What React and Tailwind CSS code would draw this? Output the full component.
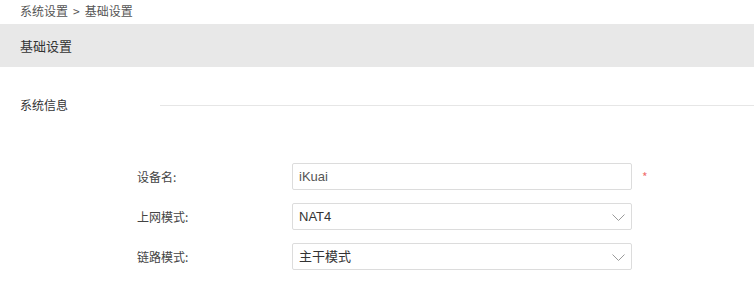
import React from "react";

const font = { fontFamily: '"Noto Sans CJK SC", "Liberation Sans", sans-serif' };
const inputFont = { fontFamily: '"Liberation Sans", "Noto Sans CJK SC", sans-serif' };

const Chevron = () => (
  <svg width="13" height="8" viewBox="0 0 13 8" fill="none" className="absolute right-[6px] top-[10px]">
    <path d="M0.5 0.5 L6.5 6.5 L12.5 0.5" stroke="#9a9a9a" strokeWidth="1" />
  </svg>
);

const Row = ({ label, children }) => (
  <div className="flex items-center h-[27px]">
    <div className="w-[292px] pl-[137px] text-[12px] text-[#444]">{label}</div>
    {children}
  </div>
);

export default function App() {
  return (
    <div className="w-[754px] h-[292px] bg-white overflow-hidden" style={font}>
      <div className="h-[24px] pl-[20px] text-[12px] leading-[22px] text-[#555]">
        系统设置<span className="mx-[5px]">&gt;</span>基础设置
      </div>
      <div className="h-[43px] bg-[#e8e8e8] pl-[20px] flex items-center text-[13px] text-[#333]">
        基础设置
      </div>
      <div className="flex items-center mt-[28px] h-[20px]">
        <div className="w-[160px] pl-[20px] text-[12px] text-[#333]">系统信息</div>
        <div className="flex-1 h-px bg-[#e6e6e6]" />
      </div>
      <div className="mt-[48px] flex flex-col gap-[13px]">
        <Row label="设备名:">
          <div className="w-[340px] h-[27px] border border-[#dcdcdc] rounded-[2px] pl-[6px] flex items-center text-[13px] text-[#555]" style={inputFont}>
            iKuai
          </div>
          <span className="ml-[10px] text-[12px] text-[#f07070]">*</span>
        </Row>
        <Row label="上网模式:">
          <div className="relative w-[340px] h-[27px] border border-[#dcdcdc] rounded-[2px] pl-[6px] flex items-center text-[13px] text-[#333]" style={inputFont}>
            NAT4
            <Chevron />
          </div>
        </Row>
        <Row label="链路模式:">
          <div className="relative w-[340px] h-[27px] border border-[#dcdcdc] rounded-[2px] pl-[6px] flex items-center text-[13px] text-[#333]" style={inputFont}>
            主干模式
            <Chevron />
          </div>
        </Row>
      </div>
    </div>
  );
}
